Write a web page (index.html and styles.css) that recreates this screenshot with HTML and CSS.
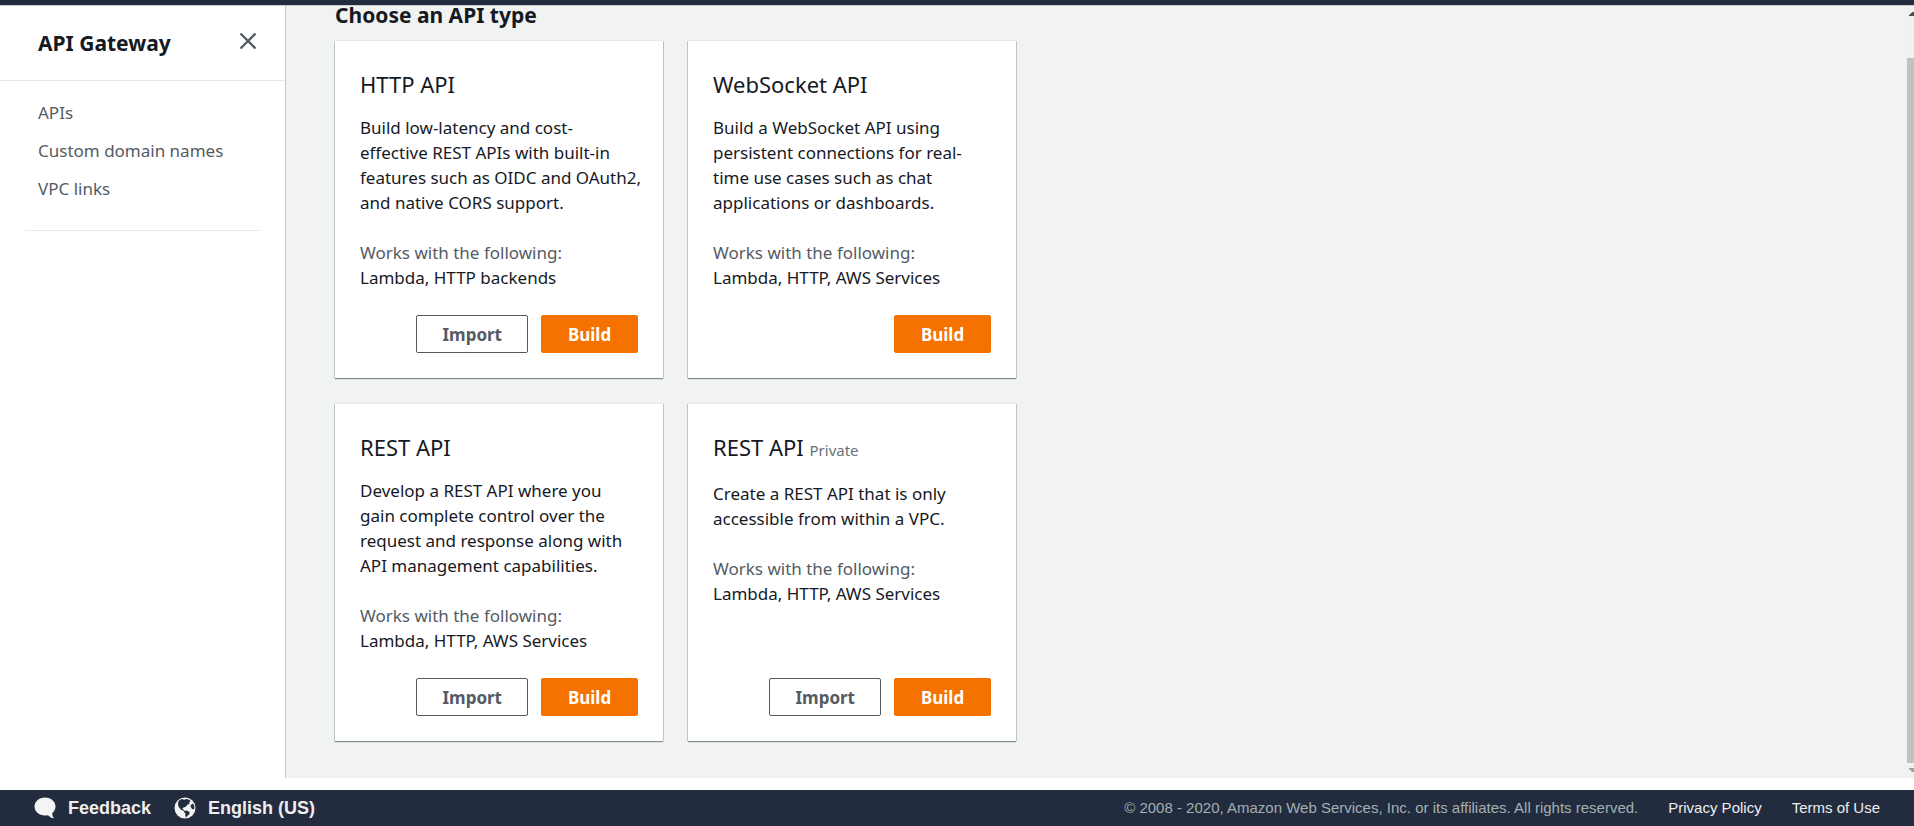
FILE: index.html
```
<!DOCTYPE html>
<html lang="en">
<head>
<meta charset="utf-8">
<title>API Gateway</title>
<link rel="stylesheet" href="styles.css">
</head>
<body>
<div class="topbar"></div>
<div class="workspace">
  <nav class="sidebar">
    <div class="sidebar-head">
      <h2 class="sidebar-title">API Gateway</h2>
      <button class="close" type="button" aria-label="Close navigation">
        <svg width="18" height="18" viewBox="0 0 18 18"><path d="M1.5 1.5 16.5 16.5M16.5 1.5 1.5 16.5" fill="none" stroke="#545b64" stroke-width="2.4"/></svg>
      </button>
    </div>
    <ul class="links">
      <li><a href="#">APIs</a></li>
      <li><a href="#">Custom domain names</a></li>
      <li><a href="#">VPC links</a></li>
    </ul>
  </nav>
  <main class="content">
    <h1 class="heading">Choose an API type</h1>
    <div class="cards">
      <section class="card">
        <h3 class="card-title">HTTP API</h3>
        <p class="text">Build low-latency and cost-<br>effective REST APIs with built-in<br>features such as OIDC and OAuth2,<br>and native CORS support.</p>
        <p class="text"><span class="muted">Works with the following:</span><br>Lambda, HTTP backends</p>
        <div class="actions"><button class="btn" type="button">Import</button><button class="btn primary" type="button">Build</button></div>
      </section>
      <section class="card">
        <h3 class="card-title">WebSocket API</h3>
        <p class="text">Build a WebSocket API using<br>persistent connections for real-<br>time use cases such as chat<br>applications or dashboards.</p>
        <p class="text"><span class="muted">Works with the following:</span><br>Lambda, HTTP, AWS Services</p>
        <div class="actions"><button class="btn primary" type="button">Build</button></div>
      </section>
      <section class="card">
        <h3 class="card-title">REST API</h3>
        <p class="text">Develop a REST API where you<br>gain complete control over the<br>request and response along with<br>API management capabilities.</p>
        <p class="text"><span class="muted">Works with the following:</span><br>Lambda, HTTP, AWS Services</p>
        <div class="actions"><button class="btn" type="button">Import</button><button class="btn primary" type="button">Build</button></div>
      </section>
      <section class="card">
        <h3 class="card-title">REST API <small class="tag">Private</small></h3>
        <p class="text">Create a REST API that is only<br>accessible from within a VPC.</p>
        <p class="text"><span class="muted">Works with the following:</span><br>Lambda, HTTP, AWS Services</p>
        <div class="actions"><button class="btn" type="button">Import</button><button class="btn primary" type="button">Build</button></div>
      </section>
    </div>
  </main>
  <div class="scrollbar" aria-hidden="true">
    <svg width="5" height="4" viewBox="0 0 5 4"><path d="M0 4V3L3.5 0H5V4Z" fill="#505050"/></svg>
    <div class="thumb"></div>
    <svg width="5" height="4" viewBox="0 0 5 4"><path d="M0 0V1L3.5 4H5V0Z" fill="#a0a0a0"/></svg>
  </div>
</div>
<footer class="footer">
  <a class="foot-strong" href="#">
    <svg width="22" height="22" viewBox="0 0 22 22"><path d="M11 .5C4.900.5.5 4.600.5 9.500S4.900 18.500 11 18.500c1 0 2-.1 3-.3 1.400 1.500 3.200 2.800 6 3-1.300-1.500-1.900-3.200-1.700-5.200 2-1.700 3.200-3.800 3.200-6.500C21.500 4.600 17.100.5 11 .5Z" fill="#f4f4f4"/></svg>
    Feedback
  </a>
  <a class="foot-strong" href="#">
    <svg width="22" height="22" viewBox="0 0 22 22"><circle cx="11" cy="11" r="10.500" fill="#f4f4f4"/><path d="M4.500 4 7.500 2l3 .8 1.500-.8 3.500.8 1 1.800-1.500.8.8 1.200-2.500 1.200-1.500 2-2.800 1-.5 1.200 2 1.200-.6.8-3.200-1.500L4.500 9.500 4 7Z" fill="#232b3e"/><path d="M10 14l2.500-.4 3.200 1.500-.5 2.500-2 1.500-1.200 1.700-.8-2.500.2-2-1.400-1ZM16.500 8.500 18.500 6.500l1.500 1.500.5 3.500-1.500 1-1.800-1.500Z" fill="#232b3e"/></svg>
    English (US)
  </a>
  <span class="copyright">© 2008 - 2020, Amazon Web Services, Inc. or its affiliates. All rights reserved.</span>
  <a class="foot-link" href="#">Privacy Policy</a>
  <a class="foot-link" href="#">Terms of Use</a>
</footer>
</body>
</html>
```
FILE: styles.css
```
* { box-sizing: border-box; }
body {
  margin: 0;
  height: 100vh;
  display: flex;
  flex-direction: column;
  overflow: hidden;
  background: #fff;
  color: #16191f;
  font: 17px/25px "Noto Sans", "Open Sans", sans-serif;
}
h1, h2, h3, p, ul { margin: 0; padding: 0; }
a { color: inherit; text-decoration: none; }
button { font: inherit; cursor: pointer; }

.topbar {
  flex: none;
  height: 5px;
  background: #232b3e;
  box-shadow: 0 1px 0 #c8cbce;
  z-index: 1;
}
.workspace {
  flex: 1;
  min-height: 0;
  display: flex;
  margin-bottom: 12px;
}

.sidebar {
  flex: none;
  width: 286px;
  border-right: 1px solid #c3c9ca;
}
.sidebar-head {
  display: flex;
  justify-content: space-between;
  align-items: flex-start;
  height: 76px;
  padding: 24px 28px 0 38px;
  border-bottom: 1px solid #e6eaea;
}
.sidebar-title { font-size: 21px; line-height: 28px; }
.close {
  display: flex;
  margin-top: 3px;
  padding: 0;
  border: 0;
  background: none;
}
.links {
  margin: 0 25px;
  padding: 13px 13px 22px;
  list-style: none;
  color: #545b64;
  line-height: 38px;
  border-bottom: 1px solid #e6eaea;
}

.content {
  flex: 1;
  min-width: 0;
  padding: 0 49px;
  background: #f1f3f3;
}
.heading {
  padding-bottom: 16px;
  font-size: 21px;
  line-height: 20px;
}
.cards {
  display: grid;
  grid-template-columns: 328px 328px;
  grid-auto-rows: 337px;
  gap: 26px 25px;
}
.card {
  display: flex;
  flex-direction: column;
  gap: 25px;
  padding: 25px;
  background: #fff;
  box-shadow: 0 1px 1px #7d898c, 1px 0 0 #c8d0d0, -1px 0 0 #c8d0d0, 0 -1px 0 #e6eaea;
}
.card-title {
  margin-bottom: -12px;
  font-size: 22px;
  font-weight: 400;
  line-height: 36px;
}
.tag { color: #687078; font-size: 15px; }
.text { white-space: nowrap; }
.muted { color: #545b64; }
.actions {
  display: flex;
  justify-content: flex-end;
  gap: 13px;
  margin-top: auto;
}
.btn {
  height: 38px;
  min-width: 97px;
  padding: 0 25px;
  border: 1px solid #545b64;
  border-radius: 2px;
  background: #fff;
  color: #545b64;
  font-weight: 700;
}
.primary { border-color: #f57200; background: #f57200; color: #fff; }

.scrollbar {
  flex: none;
  width: 9px;
  display: flex;
  flex-direction: column;
  align-items: flex-end;
  padding: 7px 0 6px;
  background: #f1f1f1;
}
.thumb {
  flex: 1;
  width: 7px;
  margin: 42px 0 5px;
  background: #c1c1c1;
}

.footer {
  flex: none;
  display: flex;
  align-items: center;
  height: 36px;
  padding: 0 34px;
  background: #232b3e;
  color: #eee;
  font: 15px/18px "Liberation Sans", Arial, sans-serif;
}
.foot-strong {
  display: flex;
  align-items: center;
  gap: 12px;
  margin-right: 23px;
  font-size: 18px;
  font-weight: 700;
}
.copyright { margin-left: auto; color: #a2b0b3; }
.foot-link { margin-left: 30px; }
```
